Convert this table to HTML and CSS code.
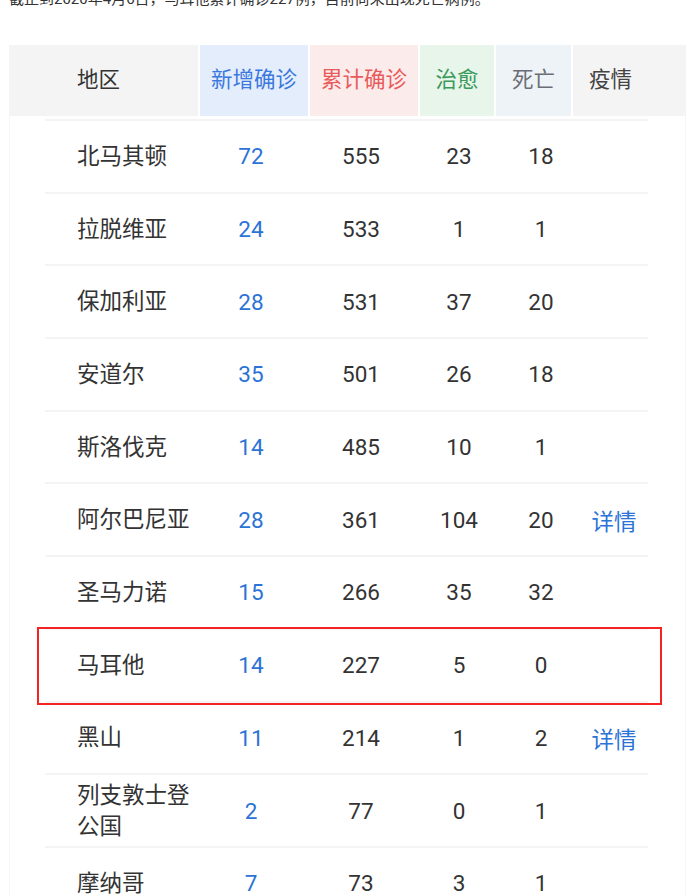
FILE: index.html
```html
<!DOCTYPE html>
<html lang="zh-CN">
  <head>
    <meta charset="UTF-8">
    <meta name="viewport" content="width=device-width, initial-scale=1.0">
    <title>欧洲疫情</title>
    <link rel="stylesheet" href="styles.css">
  </head>
  <body>
    <p class="intro">截止到2020年4月6日，马耳他累计确诊227例，目前尚未出现死亡病例。</p>

    <div class="table">
        <div class="thead">
            <div class="th th-area">地区</div>
            <div class="th th-new">新增确诊</div>
            <div class="th th-total">累计确诊</div>
            <div class="th th-cured">治愈</div>
            <div class="th th-dead">死亡</div>
            <div class="th th-more">疫情</div>
        </div>

        <div class="tbody">
            <div class="row">
                <div class="name">北马其顿</div><div class="num new">72</div><div class="num">555</div><div class="num">23</div><div class="num">18</div><div class="link"></div>
            </div>
            <div class="row">
                <div class="name">拉脱维亚</div><div class="num new">24</div><div class="num">533</div><div class="num">1</div><div class="num">1</div><div class="link"></div>
            </div>
            <div class="row">
                <div class="name">保加利亚</div><div class="num new">28</div><div class="num">531</div><div class="num">37</div><div class="num">20</div><div class="link"></div>
            </div>
            <div class="row">
                <div class="name">安道尔</div><div class="num new">35</div><div class="num">501</div><div class="num">26</div><div class="num">18</div><div class="link"></div>
            </div>
            <div class="row">
                <div class="name">斯洛伐克</div><div class="num new">14</div><div class="num">485</div><div class="num">10</div><div class="num">1</div><div class="link"></div>
            </div>
            <div class="row">
                <div class="name">阿尔巴尼亚</div><div class="num new">28</div><div class="num">361</div><div class="num">104</div><div class="num">20</div><div class="link">详情</div>
            </div>
            <div class="row">
                <div class="name">圣马力诺</div><div class="num new">15</div><div class="num">266</div><div class="num">35</div><div class="num">32</div><div class="link"></div>
            </div>
            <div class="row marked">
                <div class="name">马耳他</div><div class="num new">14</div><div class="num">227</div><div class="num">5</div><div class="num">0</div><div class="link"></div>
            </div>
            <div class="row">
                <div class="name">黑山</div><div class="num new">11</div><div class="num">214</div><div class="num">1</div><div class="num">2</div><div class="link">详情</div>
            </div>
            <div class="row">
                <div class="name">列支敦士登公国</div><div class="num new">2</div><div class="num">77</div><div class="num">0</div><div class="num">1</div><div class="link"></div>
            </div>
            <div class="row">
                <div class="name">摩纳哥</div><div class="num new">7</div><div class="num">73</div><div class="num">3</div><div class="num">1</div><div class="link"></div>
            </div>
        </div>
    </div>
  </body>
</html>
```

FILE: styles.css
```css
body {
    margin: 0;
    background: #fff;
    color: #333;
    font-family: Roboto, "Noto Sans CJK SC", sans-serif;
    overflow: hidden;
}
.intro {
    margin: -11px 0 0;
    padding-left: 9px;
    font-size: 15px;
    line-height: 20px;
    color: #333;
}
.table {
    margin: 36px 8px 0 9px;
    border-left: 1px solid #f8f8f8;
    border-right: 1px solid #f6f6f6;
}
.thead {
    display: grid;
    grid-template-columns: 189px 108px 108px 74px 75px 1fr;
    column-gap: 2px;
    height: 71px;
    margin: 0 -1px;
}
.th {
    display: flex;
    align-items: center;
    justify-content: center;
    padding-bottom: 7px;
    font-size: 21.5px;
    background: #f4f4f4;
}
.th-area {
    justify-content: flex-start;
    padding-left: 68px;
    color: #333;
}
.th-new {
    background: #e4edfb;
    color: #3b78de;
}
.th-total {
    background: #fcebeb;
    color: #e85b5b;
}
.th-cured {
    background: #e8f5ea;
    color: #3a9a5c;
}
.th-dead {
    background: #eef3f8;
    color: #6b6f75;
}
.th-more {
    justify-content: flex-start;
    padding-left: 16px;
    color: #444;
}
.tbody {
    margin: 3px 37px 0 35px;
}
.row {
    position: relative;
    display: grid;
    grid-template-columns: 151px 110px 110px 86px 78px 68px;
    align-items: center;
    box-sizing: border-box;
    height: 72.7px;
    border-top: 2px solid #f4f4f4;
    font-size: 22.5px;
}
.name {
    padding-left: 32px;
    line-height: 31px;
    color: #333;
}
.num {
    text-align: center;
    color: #333;
}
.num.new {
    color: #2b73d6;
}
.link {
    text-align: center;
    color: #2b73d6;
}
.marked::after {
    content: "";
    position: absolute;
    z-index: 1;
    left: -8px;
    right: -14px;
    top: -3px;
    bottom: -4px;
    border: 2px solid #f42424;
}
```
